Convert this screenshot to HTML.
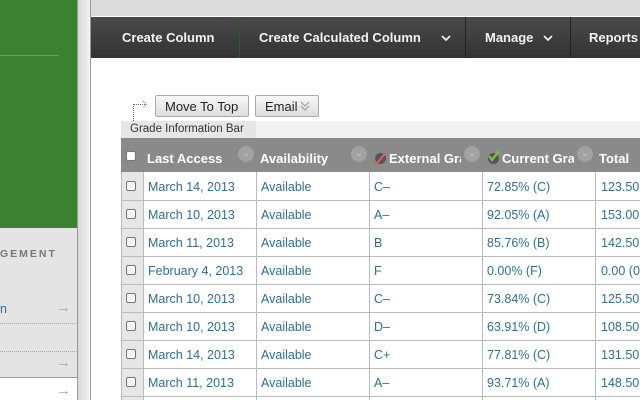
<!DOCTYPE html><html><head><style>
*{margin:0;padding:0;box-sizing:border-box}
body{width:640px;height:400px;overflow:hidden;position:relative;background:#fff;font-family:"Liberation Sans",sans-serif}
.a{position:absolute}
.nav{font-weight:bold;color:#f2f2f2;font-size:13px;top:30px}
.cell{position:absolute;font-size:12.5px;color:#2f6f8e}
.hd{position:absolute;top:151px;font-size:13px;font-weight:bold;color:#fff;white-space:nowrap;overflow:hidden}
.cb{position:absolute;width:10px;height:10px;border:1px solid #777;border-radius:2px;background:#f6f6f6}
.circ{position:absolute;top:146px;width:16px;height:16px;border-radius:50%;background:#a2a2a2;color:#c8c8c8;font-size:10px;text-align:center;line-height:15px}
.arr{position:absolute;left:56px;font-size:15px;color:#aaa}
</style></head><body>
<div class="a" style="left:0;top:0;width:77px;height:228px;background:#3b8131"></div>
<div class="a" style="left:0;top:55px;width:59px;height:1px;background:#6aa060"></div>
<div class="a" style="left:0;top:228px;width:77px;height:150px;background:#e4e4e4;border-bottom:1px solid #999"></div>
<div class="a" style="left:77px;top:0;width:1px;height:400px;background:#999"></div>
<div class="a" style="left:78px;top:0;width:12px;height:400px;background:linear-gradient(90deg,#d8d8d8,#f4f4f4)"></div>
<div class="a" style="left:90px;top:0;width:1px;height:400px;background:#999"></div>
<div class="a" style="left:0;top:248px;font-size:10.5px;font-weight:bold;letter-spacing:2px;color:#777">GEMENT</div>
<div class="a" style="left:0;top:302px;font-size:12.5px;color:#2f6f8e">n</div>
<div class="arr" style="top:299px">→</div>
<div class="arr" style="top:354px">→</div>
<div class="arr" style="top:382px">→</div>
<div class="a" style="left:0;top:323px;width:77px;border-top:1px dotted #aaa"></div>
<div class="a" style="left:0;top:351px;width:77px;border-top:1px dotted #aaa"></div>
<div class="a" style="left:91px;top:0;width:549px;height:16px;background:#dcdcdc"></div>
<div class="a" style="left:91px;top:17px;width:549px;height:41px;background:linear-gradient(#4a4a4a,#333)"></div>
<div class="a" style="left:239px;top:17px;width:1px;height:41px;background:#2d5a2a"></div>
<div class="a" style="left:465px;top:17px;width:1px;height:41px;background:#222"></div>
<div class="a" style="left:570px;top:17px;width:1px;height:41px;background:#222"></div>
<div class="a nav" style="left:122px">Create Column</div>
<div class="a nav" style="left:259px">Create Calculated Column</div>
<div class="a nav" style="left:485px">Manage</div>
<div class="a nav" style="left:589px">Reports</div>
<svg class="a" style="left:441px;top:34px" width="10" height="8"><path d="M1 2l4 4 4-4" stroke="#eee" stroke-width="1.8" fill="none"/></svg>
<svg class="a" style="left:543px;top:34px" width="10" height="8"><path d="M1 2l4 4 4-4" stroke="#eee" stroke-width="1.8" fill="none"/></svg>
<div class="a" style="left:133px;top:104px;width:1px;height:17px;border-left:1px dotted #666"></div>
<div class="a" style="left:133px;top:104px;width:12px;border-top:1px dotted #666"></div>
<svg class="a" style="left:142px;top:100px" width="6" height="9"><path d="M1 1l3.5 3.5L1 8" stroke="#666" fill="none" stroke-dasharray="1 1"/></svg>
<div class="a" style="left:155px;top:95px;width:94px;height:22px;border:1px solid #aaa;border-radius:2px;background:linear-gradient(#f8f8f8,#ddd);font-size:13px;padding:3px 0 0 9px;color:#222">Move To Top</div>
<div class="a" style="left:255px;top:95px;width:64px;height:22px;border:1px solid #aaa;border-radius:2px;background:linear-gradient(#f8f8f8,#ddd);font-size:13px;padding:3px 0 0 9px;color:#222">Email</div>
<svg class="a" style="left:299px;top:99px" width="12" height="14"><path d="M2 3l4 4 4-4M2 7l4 4 4-4" stroke="#aaa" stroke-width="1.5" fill="none"/></svg>
<div class="a" style="left:121px;top:121px;width:519px;height:17px;background:#f2f2f2"></div>
<div class="a" style="left:121px;top:121px;width:135px;height:17px;background:#e6e6e6;font-size:11.5px;color:#333;padding:2px 0 0 9px">Grade Information Bar</div>
<div class="a" style="left:121px;top:138px;width:519px;height:34px;background:#8a8a8a"></div>
<div class="a" style="left:121px;top:172px;width:22px;height:228px;background:#e6e6e6"></div>
<div class="cb" style="left:126px;top:151px;background:#fff"></div>
<div class="hd" style="left:147px">Last Access</div>
<div class="hd" style="left:260px">Availability</div>
<div class="hd" style="left:389px;width:72px">External Grade</div>
<div class="hd" style="left:502px;width:72px">Current Grade</div>
<div class="hd" style="left:599px">Total</div>
<div class="circ" style="left:238px">⌄</div><div class="circ" style="left:351px">⌄</div><div class="circ" style="left:464px">⌄</div><div class="circ" style="left:577px">⌄</div>
<div class="a" style="left:375px;top:153px;width:11px;height:11px;border-radius:50%;background:#555"></div>
<div class="a" style="left:373px;top:158px;width:15px;height:2px;background:#e06060;transform:rotate(-50deg)"></div>
<div class="a" style="left:488px;top:153px;width:11px;height:11px;border-radius:50%;background:#555"></div>
<svg class="a" style="left:487px;top:150px" width="14" height="12"><path d="M2 6l3 4 7-9" stroke="#7c3" stroke-width="2.2" fill="none"/></svg>
<div id="rows"></div>
<script>
var d=[["March 14, 2013","C–","72.85% (C)","123.50"],["March 10, 2013","A–","92.05% (A)","153.00"],["March 11, 2013","B","85.76% (B)","142.50"],["February 4, 2013","F","0.00% (F)","0.00 (0"],["March 10, 2013","C–","73.84% (C)","125.50"],["March 10, 2013","D–","63.91% (D)","108.50"],["March 14, 2013","C+","77.81% (C)","131.50"],["March 11, 2013","A–","93.71% (A)","148.50"]];
var h="";
d.forEach(function(r,i){var y=172+i*28;
h+='<div class="a" style="left:121px;top:'+(y+28)+'px;width:519px;height:1px;background:#bbb"></div>';
h+='<div class="cb" style="left:126px;top:'+(y+9)+'px"></div>';
h+='<div class="cell" style="left:148px;top:'+(y+8)+'px">'+r[0]+'</div>';
h+='<div class="cell" style="left:261px;top:'+(y+8)+'px">Available</div>';
h+='<div class="cell" style="left:374px;top:'+(y+8)+'px">'+r[1]+'</div>';
h+='<div class="cell" style="left:487px;top:'+(y+8)+'px">'+r[2]+'</div>';
h+='<div class="cell" style="left:601px;top:'+(y+8)+'px">'+r[3]+'</div>';});
[143,256,369,482,595].forEach(function(x){h+='<div class="a" style="left:'+x+'px;top:172px;width:1px;height:228px;background:#bbb"></div>';});
h+='<div class="a" style="left:121px;top:172px;width:1px;height:228px;background:#bbb"></div>';
document.getElementById("rows").innerHTML=h;
</script>
</body></html>
